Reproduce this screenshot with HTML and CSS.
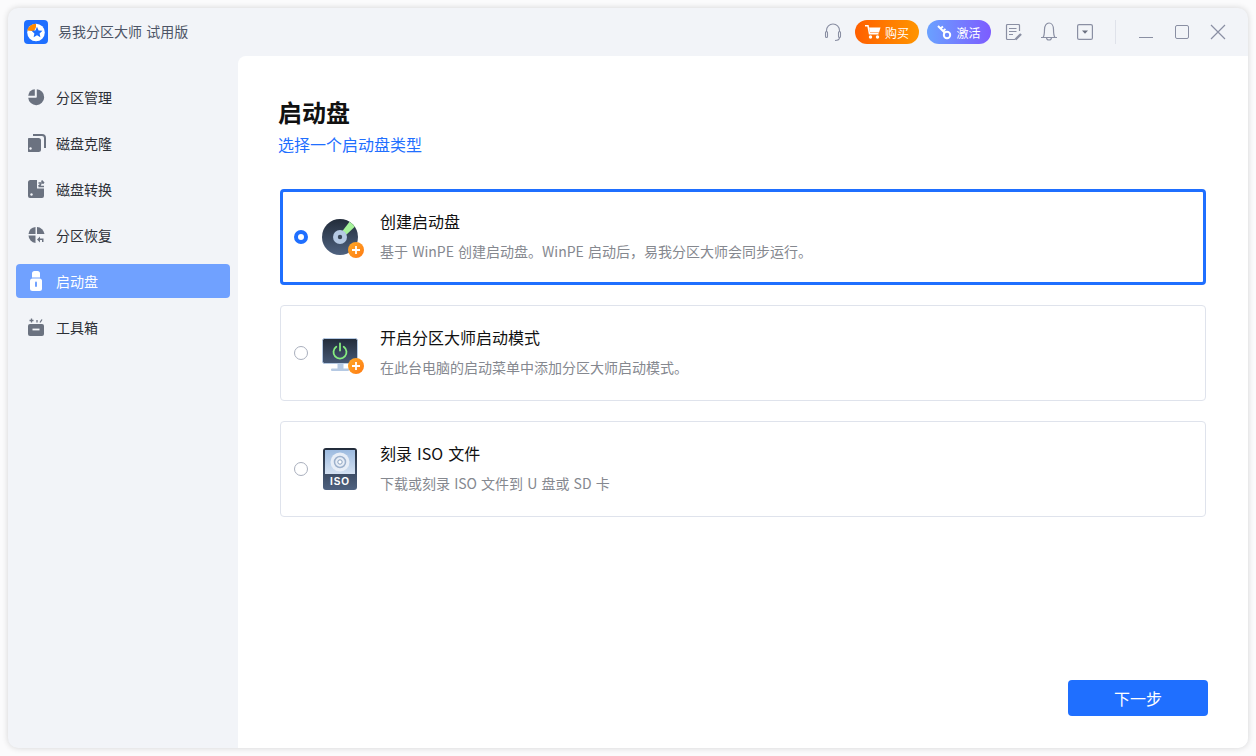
FILE: index.html
```html
<!DOCTYPE html>
<html>

<head>
  <meta charset="utf-8">
  <title>易我分区大师 试用版</title>
  <link rel="stylesheet" href="styles.css">
</head>

<body>
  <div class="window">
    <!-- 标题栏 -->
    <div class="titlebar">
      <svg class="logo" width="24" height="24" viewBox="0 0 24 24">
        <rect width="24" height="24" rx="4" fill="#1f6fff" />
        <circle cx="12" cy="12.5" r="8.8" fill="#fff" />
        <path d="M12 3.7A8.8 8.8 0 0 0 3.3 10.6L10 11.2 12 7.2Z" fill="#ff8a00" />
        <path d="M13 6.8l1.6 3.6 3.9.4-2.9 2.6.8 3.8-3.4-2-3.4 2 .8-3.8-2.9-2.6 3.9-.4Z" fill="#1f6fff" />
      </svg>
      <span class="app-name">易我分区大师 试用版</span>
      <div class="title-tools">
        <svg class="tool" width="20" height="20" viewBox="0 0 20 20" fill="none" stroke="#8a8fa3" stroke-width="1.1">
          <path d="M3.500 10V8.500a6.500 6.500 0 0 1 13 0V10" />
          <rect x="2.500" y="9.500" width="2" height="6" rx="1" />
          <rect x="15.500" y="9.500" width="2" height="6" rx="1" />
          <path d="M16.500 15.500c0 2-2 3-4.500 3" />
        </svg>
        <button class="pill buy-pill">
          <svg width="16" height="14" viewBox="0 0 16 14">
            <path d="M0 .8h3l1.500 8h9" fill="none" stroke="#fff" stroke-width="1.500" />
            <path d="M4 2.500h11.500l-1.500 5H5Z" fill="#fff" />
            <circle cx="5.500" cy="12" r="1.700" fill="#fff" />
            <circle cx="12.500" cy="12" r="1.700" fill="#fff" />
          </svg>
          购买
        </button>
        <button class="pill key-pill">
          <svg width="15" height="15" viewBox="0 0 15 15" fill="none" stroke="#fff" stroke-width="2">
            <circle cx="10" cy="10" r="3.200" />
            <path d="M7.800 7.800 1 1M3.500 3.500 6 1.500M6 6 8.500 4" />
          </svg>
          激活
        </button>
        <svg class="tool doc-tool" width="18" height="18" viewBox="0 0 18 18" fill="none" stroke="#8a8fa3" stroke-width="1.200">
          <path d="M15.500 8V2.500a1 1 0 0 0-1-1h-11a1 1 0 0 0-1 1v13a1 1 0 0 0 1 1h8" />
          <path d="M5 5.500h7.500M5 8.500h7.500M5 11.500h4" />
          <path d="M11.500 16.500 17 11" stroke-width="2.400" />
        </svg>
        <svg class="tool bell-tool" width="18" height="20" viewBox="0 0 18 20" fill="none" stroke="#8a8fa3" stroke-width="1.200">
          <path d="M1 15.500h16M3 15.500c1.500-2 1.500-4 1.500-8C4.500 3.500 6.500 1 9 1s4.500 2.500 4.500 6.500c0 4 0 6 1.500 8" />
          <path d="M6.500 15.500a2.500 2.500 0 0 0 5 0" />
        </svg>
        <svg class="tool drop-tool" width="16" height="16" viewBox="0 0 16 16" fill="none" stroke="#8a8fa3" stroke-width="1.200">
          <rect x=".6" y=".6" width="14.800" height="14.800" rx="1.500" />
          <path d="M5 6.500h6L8 9.800Z" fill="#6b7080" stroke="none" />
        </svg>
        <span class="title-divider"></span>
        <button class="win-btn"><span class="win-min"></span></button>
        <button class="win-btn"><span class="win-max"></span></button>
        <button class="win-btn">
          <svg width="16" height="16" viewBox="0 0 16 16" stroke="#8a8fa3" stroke-width="1.200">
            <path d="M1 1l14 14M15 1 1 15" />
          </svg>
        </button>
      </div>
    </div>

    <div class="app-body">
      <!-- 左侧菜单 -->
      <div class="sidebar">
        <div class="nav-item">
          <svg width="18" height="18" viewBox="1 0 18 18" fill="#6b7280">
            <path d="M9.800 1.200A8 8 0 1 1 1.200 9.800H9a.8.8 0 0 0 .8-.8Z" />
            <path d="M7.800 1.200V7.800H1.200A7 7 0 0 1 7.800 1.200Z" />
          </svg>
          <span>分区管理</span>
        </div>
        <div class="nav-item">
          <svg width="18" height="18" viewBox="1 0 18 18" fill="#6b7280">
            <rect x="0" y="4" width="14" height="14" rx="2.500" />
            <path d="M6 1h9a3 3 0 0 1 3 3v10" fill="none" stroke="#6b7280" stroke-width="2" />
            <circle cx="3.500" cy="14.500" r="1.200" fill="#f2f4f8" />
          </svg>
          <span>磁盘克隆</span>
        </div>
        <div class="nav-item">
          <svg width="18" height="18" viewBox="0 0 18 18" fill="#6b7280">
            <path d="M2.500 0H9V8.500H16V16a2 2 0 0 1-2 2H2a2 2 0 0 1-2-2V2.500A2.500 2.500 0 0 1 2.500 0Z" />
            <path d="M10.500 3h5.500M13.500 .6 16 3M16 6.500h-5.500M13 4.200 10.500 6.500" fill="none" stroke="#6b7280" stroke-width="1.700" />
            <circle cx="3.500" cy="14.500" r="1.200" fill="#f2f4f8" />
          </svg>
          <span>磁盘转换</span>
        </div>
        <div class="nav-item">
          <svg width="18" height="18" viewBox=".5 0 18 18" fill="#6b7280">
            <path d="M8 1V8H1A8 8 0 0 1 8 1Z" />
            <path d="M9.500 1A8 8 0 0 1 17 8H9.500Z" />
            <path d="M1 9.500H8V17A8 8 0 0 1 1 9.500Z" />
            <path d="M9.500 13.500l3-3v2h3.500v3.500h-1.500v-2h-2v2.500Z" />
          </svg>
          <span>分区恢复</span>
        </div>
        <div class="nav-item active">
          <svg width="18" height="20" viewBox="0 0 18 20" fill="#fff">
            <path d="M4 2.500A2.500 2.500 0 0 1 6.500 0h3A2.500 2.500 0 0 1 12 2.500V6.500H4Z" />
            <rect x="2" y="7.500" width="12" height="12.500" rx="2.500" />
            <rect x="7" y="10.500" width="2" height="5.500" rx="1" fill="#70a1ff" />
          </svg>
          <span>启动盘</span>
        </div>
        <div class="nav-item">
          <svg width="18" height="18" viewBox="0 0 18 18" fill="#6b7280">
            <rect x="0" y="6" width="16" height="12" rx="2" />
            <path d="M4.500 11.500h7" stroke="#f2f4f8" stroke-width="1.800" />
            <path d="M3.500 .5v4M1.500 2.500h4M9 2v2.500M14 1.500 12 4.500" stroke="#6b7280" stroke-width="1.300" />
          </svg>
          <span>工具箱</span>
        </div>
      </div>

      <!-- 主内容 -->
      <div class="main">
        <h1>启动盘</h1>
        <p class="subtitle">选择一个启动盘类型</p>

        <div class="card selected">
          <span class="radio"></span>
          <div class="card-icon">
            <svg width="42" height="42" viewBox="0 -3 42 42">
              <defs>
                <linearGradient id="darkGrad" x1="0" y1="0" x2="0" y2="1">
                  <stop offset="0" stop-color="#222c3a" />
                  <stop offset="1" stop-color="#4f6280" />
                </linearGradient>
                <linearGradient id="orangeGrad" x1="0" y1="0" x2="1" y2="1">
                  <stop offset="0" stop-color="#ffa928" />
                  <stop offset="1" stop-color="#ff7a12" />
                </linearGradient>
              </defs>
              <circle cx="18" cy="18" r="18" fill="url(#darkGrad)" />
              <path d="M20.500 12 27.500 2.700a18 18 0 0 1 5.300 5.100L24.500 15.500Z" fill="#a5f29a" />
              <circle cx="18" cy="18" r="7" fill="#b5c9e3" />
              <circle cx="18" cy="18" r="2.200" fill="#3a4759" />
              <circle cx="34" cy="31" r="8" fill="url(#orangeGrad)" />
              <path d="M34 27v8M30 31h8" stroke="#fff" stroke-width="1.800" />
            </svg>
          </div>
          <div class="card-text">
            <div class="card-title">创建启动盘</div>
            <div class="card-desc">基于 WinPE 创建启动盘。WinPE 启动后，易我分区大师会同步运行。</div>
          </div>
        </div>

        <div class="card">
          <span class="radio"></span>
          <div class="card-icon">
            <svg width="42" height="42" viewBox="0 -6 42 42">
              <defs>
                <linearGradient id="monGrad" x1="0" y1="0" x2="0" y2="1">
                  <stop offset="0" stop-color="#222c3a" />
                  <stop offset="1" stop-color="#465875" />
                </linearGradient>
                <linearGradient id="orangeGrad2" x1="0" y1="0" x2="1" y2="1">
                  <stop offset="0" stop-color="#ffa928" />
                  <stop offset="1" stop-color="#ff7a12" />
                </linearGradient>
              </defs>
              <rect x=".5" y=".5" width="35" height="25" rx="2" fill="url(#monGrad)" stroke="#b5c9e3" />
              <path d="M15.500 26h6v5h-6Z" fill="#b5c9e3" />
              <rect x="9" y="30.500" width="18" height="2.500" rx="1" fill="#b5c9e3" />
              <path d="M14.300 8.800a6.500 6.500 0 1 0 7.400 0M18 5.500v7" fill="none" stroke="#86ee7f" stroke-width="1.800" stroke-linecap="round" />
              <circle cx="34" cy="28" r="8" fill="url(#orangeGrad2)" />
              <path d="M34 24v8M30 28h8" stroke="#fff" stroke-width="1.800" />
            </svg>
          </div>
          <div class="card-text">
            <div class="card-title">开启分区大师启动模式</div>
            <div class="card-desc">在此台电脑的启动菜单中添加分区大师启动模式。</div>
          </div>
        </div>

        <div class="card">
          <span class="radio"></span>
          <div class="card-icon">
            <svg width="42" height="42" viewBox="0 0 42 42">
              <defs>
                <linearGradient id="isoGrad" x1="0" y1="0" x2="0" y2="1">
                  <stop offset="0" stop-color="#222c3a" />
                  <stop offset="1" stop-color="#4f6280" />
                </linearGradient>
                <linearGradient id="isoTop" x1="0" y1="0" x2="0" y2="1">
                  <stop offset="0" stop-color="#9dbbe0" />
                  <stop offset="1" stop-color="#d4e1f1" />
                </linearGradient>
              </defs>
              <rect x="1" y="0" width="34" height="42" rx="3" fill="url(#isoGrad)" />
              <rect x="3" y="2" width="30" height="24" fill="url(#isoTop)" />
              <circle cx="18" cy="14" r="9.500" fill="#e8eef7" />
              <circle cx="18" cy="14" r="5.500" fill="none" stroke="#9db1cc" stroke-width="1.500" />
              <circle cx="18" cy="14" r="2.200" fill="#fff" stroke="#8ba2c0" />
              <text class="iso-label" x="18" y="37" text-anchor="middle">ISO</text>
            </svg>
          </div>
          <div class="card-text">
            <div class="card-title">刻录 ISO 文件</div>
            <div class="card-desc">下载或刻录 ISO 文件到 U 盘或 SD 卡</div>
          </div>
        </div>

        <div class="footer">
          <button class="next-btn">下一步</button>
        </div>
      </div>
    </div>
  </div>
</body>

</html>
```

FILE: styles.css
```css
* {
  box-sizing: border-box;
}

html,
body {
  margin: 0;
  height: 100%;
}

body {
  font-family: "Noto Sans CJK SC", "Liberation Sans", sans-serif;
  background-color: #fbfbfc;
  color: #333;
  padding: 8px;
  overflow: hidden;
}

button {
  font-family: inherit;
  border: none;
  cursor: pointer;
  padding: 0;
}

svg {
  display: block;
  flex-shrink: 0;
}

.window {
  width: 1240px;
  height: 740px;
  background-color: #f2f4f8;
  border-radius: 10px;
  box-shadow: 0 0 6px rgba(0, 0, 0, 0.16);
  display: flex;
  flex-direction: column;
  overflow: hidden;
}

.titlebar {
  height: 48px;
  display: flex;
  align-items: center;
  padding: 0 12px 0 16px;
  flex-shrink: 0;
}

.app-name {
  margin-left: 10px;
  font-size: 14px;
  word-spacing: 1px;
  color: #4d5566;
  padding-bottom: 2px;
}

.title-tools {
  margin-left: auto;
  display: flex;
  align-items: center;
}

.pill {
  width: 64px;
  height: 24px;
  border-radius: 12px;
  color: #fff;
  font-size: 12px;
  display: flex;
  align-items: center;
  justify-content: center;
  gap: 4px;
}

.buy-pill {
  margin-left: 12px;
  background: linear-gradient(90deg, #ff5f00, #ff9500);
}

.key-pill {
  margin-left: 8px;
  background: linear-gradient(90deg, #6aa1ff, #7d5cff);
}

.doc-tool {
  margin-left: 13px;
}

.bell-tool {
  margin-left: 18px;
}

.drop-tool {
  margin-left: 19px;
}

.title-divider {
  width: 1px;
  height: 24px;
  background-color: #dfe2ea;
  margin: 0 12px 0 22px;
}

.win-btn {
  width: 36px;
  height: 24px;
  background: none;
  display: flex;
  align-items: center;
  justify-content: center;
}

.win-min {
  width: 14px;
  height: 1px;
  margin-top: 11px;
  background-color: #8a8fa3;
}

.win-max {
  width: 14px;
  height: 14px;
  border: 1px solid #8a8fa3;
  border-radius: 2px;
}

.app-body {
  flex: 1;
  display: flex;
  min-height: 0;
}

.sidebar {
  width: 230px;
  padding: 24px 8px 0;
  display: flex;
  flex-direction: column;
  gap: 12px;
  flex-shrink: 0;
}

.nav-item {
  height: 34px;
  border-radius: 4px;
  padding: 0 12px;
  display: flex;
  align-items: center;
  gap: 10px;
  font-size: 14px;
  color: #2c2f36;
}

.nav-item.active {
  background-color: #70a1ff;
  color: #fff;
}

.main {
  flex: 1;
  background-color: #fff;
  border-top-left-radius: 8px;
  padding: 40px 40px 32px;
  display: flex;
  flex-direction: column;
}

h1 {
  margin: 0;
  font-size: 24px;
  line-height: 32px;
  font-weight: 700;
  color: #111;
}

.subtitle {
  margin: 4px 0 13px;
  font-size: 16px;
  line-height: 24px;
  color: #1f6fff;
}

.card {
  margin: 20px 2px 0;
  height: 96px;
  border: 1px solid #dfe3ec;
  border-radius: 4px;
  display: flex;
  align-items: center;
  padding-left: 13px;
}

.card.selected {
  border: 3px solid #1f6fff;
  padding-left: 11px;
}

.radio {
  width: 14px;
  height: 14px;
  border: 1px solid #a9afbd;
  border-radius: 50%;
  flex-shrink: 0;
}

.card.selected .radio {
  border: 4px solid #1f6fff;
}

.card-icon {
  width: 42px;
  margin-left: 14px;
  flex-shrink: 0;
}

.card-text {
  margin-left: 16px;
  padding-bottom: 3px;
}

.card-title {
  font-size: 16px;
  line-height: 24px;
  word-spacing: 1.5px;
  color: #111;
}

.card-desc {
  margin-top: 7px;
  font-size: 14px;
  line-height: 22px;
  word-spacing: 1px;
  color: #85888f;
}

.iso-label {
  font-family: "Liberation Sans", sans-serif;
  font-size: 10px;
  font-weight: 700;
  letter-spacing: 1px;
  fill: #fff;
}

.footer {
  margin-top: auto;
  display: flex;
  justify-content: flex-end;
}

.next-btn {
  width: 140px;
  height: 36px;
  background-color: #1f6fff;
  color: #fff;
  font-size: 16px;
  border-radius: 4px;
}
```
